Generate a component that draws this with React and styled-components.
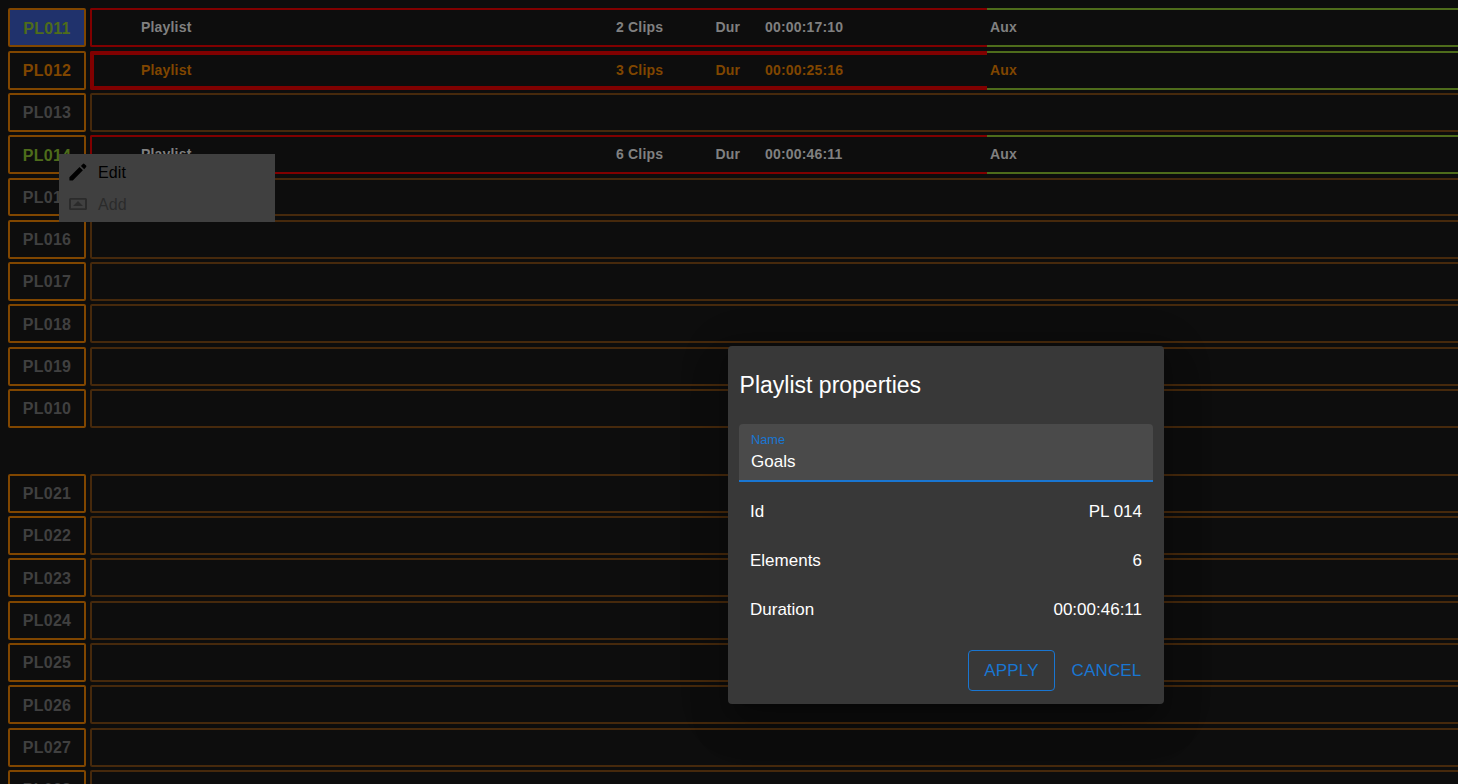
import React from "react";
import styled, { createGlobalStyle, css } from "styled-components";

const color = {
  page: "#0d0d0d",
  orange: "#804600",
  brown: "#46290c",
  red: "#800000",
  green: "#4e6c1b",
  muted: "#404040",
  text: "#808080",
  primary: "#1976d2",
};

const GlobalStyle = createGlobalStyle`
  * { box-sizing: border-box; }
  body {
    margin: 0;
    background: ${color.page};
    font-family: "Liberation Sans", Arial, sans-serif;
    overflow: hidden;
  }
`;

const Screen = styled.main`
  position: relative;
  width: 100vw;
  height: 100vh;
  padding: 8.1875px 0 0 8px;
  overflow: hidden;
`;

const Row = styled.div`
  display: flex;
  gap: 4px;
  width: 1500px;
  height: 38.984375px;
  margin-bottom: 3.34375px;
`;

const RowGap = styled.div`
  height: 42.328125px;
`;

const IdButton = styled.button`
  flex: none;
  width: 78px;
  padding: 1.7px 0 0;
  border: 2px solid ${color.orange};
  border-radius: 2px;
  background: ${(p) => (p.$selected ? "#20326c" : "transparent")};
  color: ${(p) => p.$tone};
  font: bold 16px "Liberation Sans", Arial, sans-serif;
  letter-spacing: 0.25px;
`;

const EmptySlot = styled.div`
  flex: 1;
  border: 2px solid ${color.brown};
  border-radius: 2px;
`;

const segment = css`
  align-items: center;
  border-style: solid;
  color: ${(p) => p.$tone};
  font-size: 14px;
  font-weight: bold;
  letter-spacing: 0.18px;
  line-height: 15px;
`;

const MainSegment = styled.div`
  ${segment}
  display: grid;
  grid-template-columns: 475px 99.5px 49.5px 1fr;
  flex: none;
  width: 897px;
  padding-left: 49px;
  border-width: 2px 0 2px 2px;
  border-color: ${color.red};
  border-radius: 2px 0 0 2px;
  ${(p) =>
    p.$active &&
    css`
      box-shadow: inset 2px 2px 0 ${color.red}, inset 0 -2px 0 ${color.red};
    `}
`;

const AuxSegment = styled.div`
  ${segment}
  display: flex;
  flex: 1;
  margin-left: -4px;
  padding-left: 3px;
  border-width: 2px 0;
  border-color: ${color.green};
`;

const Menu = styled.div`
  position: absolute;
  left: 59px;
  top: 154px;
  width: 216px;
  height: 68px;
  padding: 2px 0;
  background: #404040;
`;

const MenuItem = styled.div`
  display: flex;
  align-items: center;
  gap: 8px;
  height: 32px;
  padding-left: 7px;
  font-size: 16px;
  letter-spacing: 0.1px;
  color: ${(p) => (p.$disabled ? "#2b2b2b" : "#000")};

  svg {
    width: 24px;
    height: 24px;
    fill: currentColor;
  }
`;

const MenuLabel = styled.span`
  padding-top: 2px;
`;

const Dialog = styled.section`
  position: absolute;
  left: 728px;
  top: 346px;
  width: 436px;
  height: 358px;
  padding: 0 11px;
  border-radius: 4px;
  background: #383838;
  color: #fff;
  font-size: 17px;
  box-shadow: 0 11px 15px -7px rgba(0, 0, 0, 0.2),
    0 24px 38px 3px rgba(0, 0, 0, 0.14), 0 9px 46px 8px rgba(0, 0, 0, 0.12);
`;

const Title = styled.h2`
  height: 78px;
  margin: 0;
  padding-left: 0.6px;
  font-size: 23px;
  font-weight: 400;
  line-height: 78px;
`;

const Field = styled.label`
  display: flex;
  flex-direction: column;
  height: 58px;
  padding: 8px 12px 0;
  border-bottom: 2px solid ${color.primary};
  border-radius: 4px 4px 0 0;
  background: #4a4a4a;
`;

const FieldLabel = styled.span`
  color: ${color.primary};
  font-size: 12.75px;
  line-height: 15px;
`;

const FieldInput = styled.input`
  width: 100%;
  height: 20px;
  margin-top: 5px;
  padding: 0;
  border: 0;
  outline: 0;
  background: transparent;
  color: #fff;
  font: 17px "Liberation Sans", Arial, sans-serif;
`;

const Property = styled.div`
  display: flex;
  align-items: center;
  justify-content: space-between;
  height: 49px;
  padding: 0 11px;
`;

const Properties = styled.div`
  padding-top: 5px;
`;

const Actions = styled.div`
  display: flex;
  justify-content: flex-end;
  margin-top: 16px;
`;

const ActionButton = styled.button`
  width: ${(p) => p.$width};
  height: 41px;
  padding: 0;
  border: 1px solid ${(p) => (p.$outlined ? color.primary : "transparent")};
  border-radius: 4px;
  background: transparent;
  color: ${color.primary};
  font: 17px "Liberation Sans", Arial, sans-serif;
  letter-spacing: 0.15px;
  text-transform: uppercase;

  & + & {
    padding-left: 5px;
  }
`;

const playlists = {
  PL011: { clips: 2, duration: "00:00:17:10", tone: color.text, idTone: color.green, selected: true },
  PL012: { clips: 3, duration: "00:00:25:16", tone: color.orange, idTone: color.orange, active: true },
  PL014: { clips: 6, duration: "00:00:46:11", tone: color.text, idTone: color.green },
};

const banks = [
  ["PL011", "PL012", "PL013", "PL014", "PL015", "PL016", "PL017", "PL018", "PL019", "PL010"],
  ["PL021", "PL022", "PL023", "PL024", "PL025", "PL026", "PL027", "PL028"],
];

function PlaylistRow({ id }) {
  const item = playlists[id];
  return (
    <Row>
      <IdButton $tone={item ? item.idTone : color.muted} $selected={item?.selected}>
        {id}
      </IdButton>
      {item ? (
        <>
          <MainSegment $tone={item.tone} $active={item.active}>
            <span>Playlist</span>
            <span>{item.clips} Clips</span>
            <span>Dur</span>
            <span>{item.duration}</span>
          </MainSegment>
          <AuxSegment $tone={item.tone}>Aux</AuxSegment>
        </>
      ) : (
        <EmptySlot />
      )}
    </Row>
  );
}

function PencilIcon() {
  return (
    <svg viewBox="0 0 24 24">
      <path d="M3.400 17.300v2.700q0 .5.5.5h2.900L16.900 10.300l-3.400-3.400L3.400 17.300zM20.100 7.100a1.200 1.200 0 0 0 0-1.500l-1.700-1.700a1.200 1.200 0 0 0-1.500 0l-2 2 3.300 3.300 1.900-2.100z" />
    </svg>
  );
}

function InsertIcon() {
  return (
    <svg viewBox="0 0 24 24">
      <path
        fillRule="evenodd"
        d="M4.500 6h15A1.500 1.500 0 0 1 21 7.500v9a1.500 1.500 0 0 1-1.500 1.500h-15A1.500 1.500 0 0 1 3 16.500v-9A1.500 1.500 0 0 1 4.500 6zM5 7.800v8.400h14V7.800zM12 9l5 5H7z"
      />
    </svg>
  );
}

export default function App() {
  return (
    <>
      <GlobalStyle />
      <Screen>
        {banks.map((bank, i) => (
          <React.Fragment key={bank[0]}>
            {i > 0 && <RowGap />}
            {bank.map((id) => (
              <PlaylistRow key={id} id={id} />
            ))}
          </React.Fragment>
        ))}
        <Menu>
          <MenuItem>
            <PencilIcon />
            <MenuLabel>Edit</MenuLabel>
          </MenuItem>
          <MenuItem $disabled>
            <InsertIcon />
            <MenuLabel>Add</MenuLabel>
          </MenuItem>
        </Menu>
        <Dialog>
          <Title>Playlist properties</Title>
          <Field>
            <FieldLabel>Name</FieldLabel>
            <FieldInput defaultValue="Goals" />
          </Field>
          <Properties>
            <Property>
              <span>Id</span>
              <span>PL 014</span>
            </Property>
            <Property>
              <span>Elements</span>
              <span>6</span>
            </Property>
            <Property>
              <span>Duration</span>
              <span>00:00:46:11</span>
            </Property>
          </Properties>
          <Actions>
            <ActionButton $outlined $width="87px">
              Apply
            </ActionButton>
            <ActionButton $width="98px">Cancel</ActionButton>
          </Actions>
        </Dialog>
      </Screen>
    </>
  );
}
